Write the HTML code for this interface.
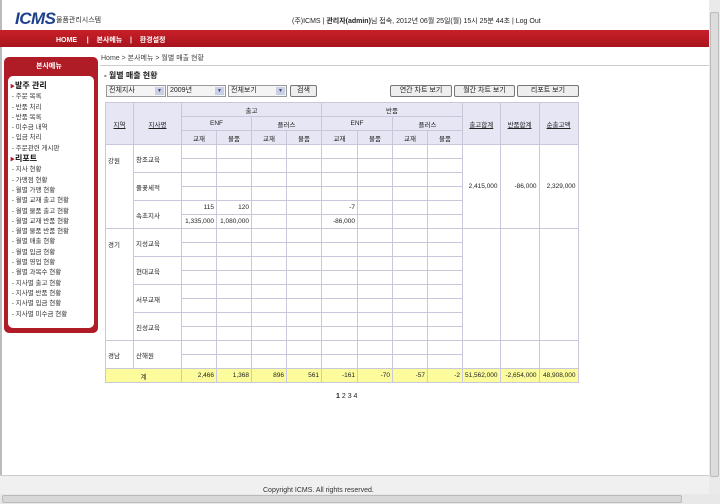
<!DOCTYPE html>
<html><head><meta charset="utf-8"><style>
*{margin:0;padding:0;box-sizing:border-box}
body{width:720px;height:504px;overflow:hidden;background:#fff;font-family:"Liberation Sans","Noto Sans CJK KR","NanumGothic",sans-serif;font-size:7px;color:#222;position:relative}
.a{position:absolute;white-space:nowrap}
.logo{left:15px;top:9px;font-size:17px;font-weight:bold;font-style:italic;color:#1d3f8c;letter-spacing:-0.5px}
.nav{left:0;top:30px;width:709px;height:17px;background:linear-gradient(#c8202a,#a8141c);color:#fff;font-size:7px;font-weight:bold}
.side{left:4px;top:57px;width:94px;height:276px;background:#b01c26;border-radius:5px}
.inner{left:8px;top:76px;width:86px;height:252px;background:#fff;border-radius:5px}
.menu{left:10px;font-size:6.5px;color:#333;line-height:10.3px}
.menu b{font-size:8px;color:#111;line-height:10.3px}
.sel{top:85px;height:12px;border:1px solid #999;background:#f4f4f4;font-size:7px;padding-left:2px;line-height:10px}
.sel i{position:absolute;right:1px;top:1px;width:9px;height:8px;background:#c8d0e8;font-style:normal;font-size:5px;text-align:center;line-height:8px;color:#446}
.btn{top:85px;height:12px;border:1px solid #777;background:#eee;font-size:7px;text-align:center;line-height:10px;border-radius:2px}
table{position:absolute;left:105px;top:102px;border-collapse:collapse;table-layout:fixed;font-size:6.5px}
td{border:1px solid #c8c8dd;height:14px;padding:0 2px;white-space:nowrap;overflow:hidden}
.h td{background:#e6e6f4;text-align:center}
.u{text-decoration:underline}
.r{text-align:right}
.tot td{background:#fcfc9c;text-align:right}
</style></head><body>
<div class="a" style="left:0;top:0;width:2px;height:504px;background:#bbb"></div>
<div class="a logo">ICMS</div>
<div class="a" style="left:56px;top:15px;font-size:7px;color:#333">물품관리시스템</div>
<div class="a" style="left:292px;top:16px;font-size:7px;color:#222">(주)ICMS | <b>관리자(admin)</b>님 접속, 2012년 06월 25일(월) 15시 25분 44초 | Log Out</div>
<div class="a nav"><span class="a" style="left:56px;top:5px">HOME &nbsp;&nbsp;&nbsp;&nbsp;|&nbsp;&nbsp;&nbsp; 본사메뉴 &nbsp;&nbsp;&nbsp;|&nbsp;&nbsp;&nbsp; 환경설정</span></div>
<div class="a side"></div>
<div class="a" style="left:36px;top:61px;color:#fff;font-size:7px;font-weight:bold">본사메뉴</div>
<div class="a inner"></div>
<div class="a menu" style="top:81px"><b><span style="color:#b01c26;font-size:5px">▶</span>발주 관리</b><br>&nbsp;- 주문 목록<br>&nbsp;- 반품 처리<br>&nbsp;- 반품 목록<br>&nbsp;- 미수금 내역<br>&nbsp;- 입금 처리<br>&nbsp;- 주문관련 게시판<br><b><span style="color:#b01c26;font-size:5px">▶</span>리포트</b><br>&nbsp;- 지사 현황<br>&nbsp;- 가맹점 현황<br>&nbsp;- 월별 가맹 현황<br>&nbsp;- 월별 교재 출고 현황<br>&nbsp;- 월별 물품 출고 현황<br>&nbsp;- 월별 교재 반품 현황<br>&nbsp;- 월별 물품 반품 현황<br>&nbsp;- 월별 매출 현황<br>&nbsp;- 월별 입금 현황<br>&nbsp;- 월별 영업 현황<br>&nbsp;- 월별 과목수 현황<br>&nbsp;- 지사별 출고 현황<br>&nbsp;- 지사별 반품 현황<br>&nbsp;- 지사별 입금 현황<br>&nbsp;- 지사별 미수금 현황</div>
<div class="a" style="left:101px;top:53px;font-size:7px;color:#444">Home &gt; 본사메뉴 &gt; 월별 매출 현황</div>
<div class="a" style="left:100px;top:65px;width:609px;height:1px;background:#ccc"></div>
<div class="a" style="left:104px;top:70px;font-size:8px;font-weight:bold;color:#222">- 월별 매출 현황</div>
<div class="a sel" style="left:106px;width:60px">전체지사<i>▼</i></div>
<div class="a sel" style="left:167px;width:59px">2009년<i>▼</i></div>
<div class="a sel" style="left:228px;width:59px">전체보기<i>▼</i></div>
<div class="a btn" style="left:290px;width:27px">검색</div>
<div class="a btn" style="left:390px;width:62px">연간 차트 보기</div>
<div class="a btn" style="left:454px;width:61px">월간 차트 보기</div>
<div class="a btn" style="left:517px;width:62px">리포트 보기</div>
<table>
<colgroup><col style="width:28px"><col style="width:48px"><col style="width:35px"><col style="width:35px"><col style="width:35px"><col style="width:35px"><col style="width:36px"><col style="width:35px"><col style="width:35px"><col style="width:35px"><col style="width:36px"><col style="width:39px"><col style="width:39px"><col style="width:39px"></colgroup>
<tr class="h"><td rowspan="3" class="u">지역</td><td rowspan="3" class="u">지사명</td><td colspan="4">출고</td><td colspan="4">반품</td><td rowspan="3" class="u">출고합계</td><td rowspan="3" class="u">반품합계</td><td rowspan="3" class="u">순출고액</td></tr>
<tr class="h"><td colspan="2">ENF</td><td colspan="2">플러스</td><td colspan="2">ENF</td><td colspan="2">플러스</td></tr>
<tr class="h"><td>교재</td><td>물품</td><td>교재</td><td>물품</td><td>교재</td><td>물품</td><td>교재</td><td>물품</td></tr>
<tr><td rowspan="6" style="vertical-align:top;padding-top:10px">강원</td><td rowspan="2">창조교육</td><td></td><td></td><td></td><td></td><td></td><td></td><td></td><td></td><td rowspan="6" class="r">2,415,000</td><td rowspan="6" class="r">-86,000</td><td rowspan="6" class="r">2,329,000</td></tr>
<tr><td></td><td></td><td></td><td></td><td></td><td></td><td></td><td></td></tr>
<tr><td rowspan="2">풀꽃세적</td><td></td><td></td><td></td><td></td><td></td><td></td><td></td><td></td></tr>
<tr><td></td><td></td><td></td><td></td><td></td><td></td><td></td><td></td></tr>
<tr><td rowspan="2">속초지사</td><td class="r">115</td><td class="r">120</td><td></td><td></td><td class="r">-7</td><td></td><td></td><td></td></tr>
<tr><td class="r">1,335,000</td><td class="r">1,080,000</td><td></td><td></td><td class="r">-86,000</td><td></td><td></td><td></td></tr>
<tr><td rowspan="8" style="vertical-align:top;padding-top:10px">경기</td><td rowspan="2">지성교육</td><td></td><td></td><td></td><td></td><td></td><td></td><td></td><td></td><td rowspan="8"></td><td rowspan="8"></td><td rowspan="8"></td></tr>
<tr><td></td><td></td><td></td><td></td><td></td><td></td><td></td><td></td></tr>
<tr><td rowspan="2">현대교육</td><td></td><td></td><td></td><td></td><td></td><td></td><td></td><td></td></tr>
<tr><td></td><td></td><td></td><td></td><td></td><td></td><td></td><td></td></tr>
<tr><td rowspan="2">서부교재</td><td></td><td></td><td></td><td></td><td></td><td></td><td></td><td></td></tr>
<tr><td></td><td></td><td></td><td></td><td></td><td></td><td></td><td></td></tr>
<tr><td rowspan="2">진성교육</td><td></td><td></td><td></td><td></td><td></td><td></td><td></td><td></td></tr>
<tr><td></td><td></td><td></td><td></td><td></td><td></td><td></td><td></td></tr>
<tr><td rowspan="2">경남</td><td rowspan="2">산해원</td><td></td><td></td><td></td><td></td><td></td><td></td><td></td><td></td><td rowspan="2"></td><td rowspan="2"></td><td rowspan="2"></td></tr>
<tr><td></td><td></td><td></td><td></td><td></td><td></td><td></td><td></td></tr>
<tr class="tot"><td colspan="2" style="text-align:center">계</td><td>2,466</td><td>1,368</td><td>896</td><td>561</td><td>-161</td><td>-70</td><td>-57</td><td>-2</td><td>51,562,000</td><td>-2,654,000</td><td>48,908,000</td></tr>
</table>
<div class="a" style="left:336px;top:393px;font-size:7px"><b>1</b> 2 3 4</div>
<div class="a" style="left:0;top:475px;width:709px;height:19px;background:#f0f0f0;border-top:1px solid #ccc"></div>
<div class="a" style="left:263px;top:487px;font-size:7px;color:#333">Copyright ICMS. All rights reserved.</div>
<div class="a" style="left:709px;top:0;width:11px;height:494px;background:#eaeaea"></div>
<div class="a" style="left:710px;top:12px;width:9px;height:465px;background:#dcdcdc;border:1px solid #bbb;border-radius:2px"></div>
<div class="a" style="left:0;top:494px;width:720px;height:10px;background:#e8e8e8"></div>
<div class="a" style="left:2px;top:495px;width:680px;height:8px;background:#d8d8d8;border:1px solid #bbb;border-radius:2px"></div>
</body></html>
